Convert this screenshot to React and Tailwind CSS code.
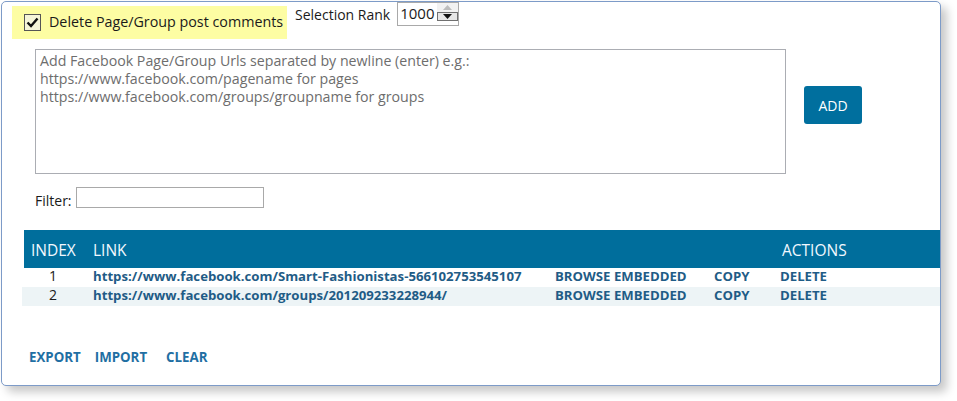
import React from 'react';

const rows = [
  { idx: 1, url: 'https://www.facebook.com/Smart-Fashionistas-566102753545107' },
  { idx: 2, url: 'https://www.facebook.com/groups/201209233228944/' },
];

const FONT = { fontFamily: '"Open Sans", "Noto Sans", Arial, sans-serif' };

function Spinner() {
  return (
    <div className="flex h-[24px] w-[62px] border border-[#a9a9a9] bg-white">
      <div className="flex-1 pl-[2px] pt-[1px] text-[15px] leading-[18px] text-[#1a1a1a]">1000</div>
      <div className="flex w-[21px] flex-col">
        <div className="flex h-[9px] items-center justify-center bg-[#f2f2f2]">
          <svg width="9" height="5" viewBox="0 0 9 5">
            <path d="M0 5 L4.5 0 L9 5 Z" fill="#bdbdbd" />
          </svg>
        </div>
        <div className="flex h-[9px] items-center justify-center border border-[#707070] bg-[#e6e6e6]">
          <svg width="9" height="5" viewBox="0 0 9 5">
            <path d="M0 0 L4.5 5 L9 0 Z" fill="#111" />
          </svg>
        </div>
      </div>
    </div>
  );
}

export default function App() {
  return (
    <div className="h-[401px] w-[957px] bg-white" style={FONT}>
      <div className="ml-[1px] mt-[1px] flex h-[385px] w-[940px] flex-col rounded-[5px] border border-[#7d9bc8] bg-white shadow-[6px_6px_10px_rgba(0,0,0,0.22)]">
        <div className="flex items-start">
          <div className="ml-[10px] mt-[4px] flex h-[33px] w-[275px] items-center bg-[#fdfda3] pl-[12px]">
            <div className="flex h-[17px] w-[17px] items-center justify-center border border-[#555] bg-[#f5f5d8]">
              <svg width="13" height="11" viewBox="0 0 13 11">
                <path d="M1.5 5.5 L5 9 L11.5 1.5" fill="none" stroke="#111" strokeWidth="2.4" />
              </svg>
            </div>
            <span className="ml-[8px] pb-[2px] text-[14.3px] text-[#1a1a1a]">Delete Page/Group post comments</span>
          </div>
          <span className="ml-[8px] mt-[4px] text-[14px] leading-[18px] text-[#1a1a1a]">Selection Rank</span>
          <div className="ml-[7px]">
            <Spinner />
          </div>
        </div>

        <div className="mt-[10px] flex items-start">
          <div className="ml-[33px] h-[125px] w-[751px] border border-[#abadb3] px-[4px] pt-[2px] text-[14.2px] leading-[18px] text-[#6d6d6d]">
            <div>Add Facebook Page/Group Urls separated by newline (enter) e.g.:</div>
            <div>https://www.facebook.com/pagename for pages</div>
            <div>https://www.facebook.com/groups/groupname for groups</div>
          </div>
          <button className="ml-[18px] mt-[37px] flex h-[38px] w-[58px] items-center justify-center rounded-[3px] bg-[#006f9e] text-[14px] text-white">
            ADD
          </button>
        </div>

        <div className="mt-[10px] flex items-center">
          <span className="ml-[33px] mt-[6px] text-[14px] text-[#1a1a1a]">Filter:</span>
          <div className="ml-[4px] h-[21px] w-[188px] border border-[#a9a9a9]" />
        </div>

        <div className="ml-[20px] mt-[19px]">
          <div className="ml-[2px] grid h-[38px] grid-cols-[69px_689px_1fr] items-center bg-[#006e9c] pt-[3px] text-[15.5px] text-[#f2f8ff]">
            <span className="pl-[7px]">INDEX</span>
            <span>LINK</span>
            <span>ACTIONS</span>
          </div>
          {rows.map((r, i) => (
            <div
              key={r.idx}
              className={`grid h-[19px] grid-cols-[71px_462px_159px_66px_1fr] items-start text-[13.2px] leading-[16px] font-bold text-[#1f5c86] ${i % 2 ? 'bg-[#edf4f6]' : 'bg-white'}`}
            >
              <span className="pl-[27px] text-[14px] font-normal text-[#1a1a1a]">{r.idx}</span>
              <span>{r.url}</span>
              <span>BROWSE EMBEDDED</span>
              <span>COPY</span>
              <span>DELETE</span>
            </div>
          ))}
        </div>

        <div className="ml-[27px] mt-[42px] flex text-[13.3px] font-bold text-[#1f6fa3]">
          <span>EXPORT</span>
          <span className="ml-[14px]">IMPORT</span>
          <span className="ml-[19px]">CLEAR</span>
        </div>
      </div>
    </div>
  );
}
